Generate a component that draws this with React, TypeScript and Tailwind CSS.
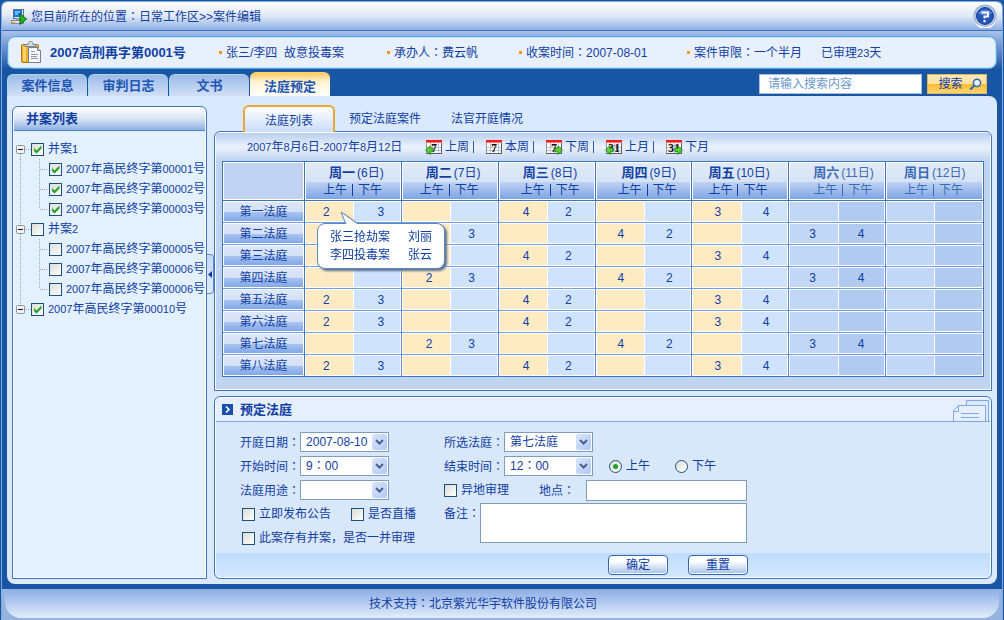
import React from "react";

const FONT = "font-['Liberation_Sans','Noto_Sans_CJK_SC',sans-serif]";

function Colon() {
  return <span className="font-['Noto_Sans_CJK_TC','Noto_Sans_CJK_SC',sans-serif]">：</span>;
}

/* Sets the digits of a mixed label one size smaller than its characters. */
function Mixed({ text }: { text: string }) {
  return (
    <>
      {text.split(/([0-9-]+)/).map((part, i) =>
        i % 2 ? (
          <span key={i} className="text-[11px]">
            {part}
          </span>
        ) : (
          part
        ),
      )}
    </>
  );
}

/* ---------- icons ---------- */

function ComputerIcon() {
  return (
    <svg width="17" height="17" viewBox="0 0 17 17" shapeRendering="crispEdges" aria-hidden="true">
      <path d="M3 1h10v9H3z" fill="#dfe6ee" stroke="#5b7290" />
      <path d="M4 2h8v7H4z" fill="#1d74e0" />
      <path d="M5 3h5v2H5zM5 5h3v2H5z" fill="#55c3ff" />
      <path d="M6 10h4v2H6z" fill="#8c9aab" />
      <path d="M1 12h12v3H1z" fill="#e2e2dc" stroke="#7d8896" />
      <path d="M1 14h4v1H1z" fill="#f2a51f" />
      <path d="M10 5.500l6.500 5.500-6.500 5.500z" fill="#24b41c" stroke="#0b6412" shapeRendering="auto" />
    </svg>
  );
}

function ClipboardIcon() {
  return (
    <svg width="21" height="23" viewBox="0 0 21 23" aria-hidden="true">
      <rect x="0.500" y="3.500" width="17" height="18" rx="1" fill="#f1ae2b" stroke="#a9741b" />
      <path d="M2 5h3v15H2z" fill="#ffd26a" />
      <path d="M4 5.500V3.500h3C7 1.500 8 .5 9.500 .5S12 1.500 12 3.500h3v2z" fill="#d7dbe0" stroke="#7b828c" />
      <path d="M7.500 6.500h9l3 3v12h-12z" fill="#f8fafc" stroke="#75808f" />
      <path d="M16.500 6.500v3h3" fill="#dde3ea" stroke="#75808f" />
      <path d="M10 10.500h4M10 13.500h7M10 15.500h6M10 17.500h7" stroke="#8c97a8" />
    </svg>
  );
}

function HelpIcon() {
  return (
    <svg width="24" height="24" viewBox="0 0 24 24" aria-hidden="true">
      <circle cx="12" cy="12" r="11.500" fill="#9db5da" />
      <path d="M1 14a11 11 0 0 0 22 0a11 9 0 0 1-22 0z" fill="#fff" />
      <circle cx="12" cy="12" r="9.500" fill="#e8eef8" />
      <circle cx="12" cy="12" r="8.500" fill="#2457b4" stroke="#123c8e" />
      <path d="M5 9a8 7 0 0 1 14 0c-3 3-11 3-14 0z" fill="#5685d4" />
      <path d="M8.500 8.500h6.500v4h-3.500v2M11.500 16v2.200" fill="none" stroke="#fff" strokeWidth="2" />
    </svg>
  );
}

function MagnifierIcon() {
  return (
    <svg width="13" height="13" viewBox="0 0 13 13" aria-hidden="true">
      <circle cx="8" cy="4.800" r="3.600" fill="#e9f0fb" stroke="#3565ad" strokeWidth="1.500" />
      <path d="M5.300 7.500L1.300 11.500" stroke="#3565ad" strokeWidth="2.200" />
    </svg>
  );
}

function CalendarIcon({ label, arrow }: { label: string; arrow?: "left" | "right" }) {
  return (
    <svg width="18" height="16" viewBox="0 0 18 16" className="shrink-0" aria-hidden="true">
      <rect x="1.500" y="1.500" width="15" height="13" fill="#fff" stroke="#8a94a6" />
      <path d="M2 8.500h14M2 11.500h14M5.500 4v10M9.500 4v10M13.500 4v10" stroke="#b8c2d2" />
      <path d="M1 1h16v3H1z" fill="#ee1c1c" />
      <path d="M1 3h16v1H1z" fill="#ff7a6a" />
      <path d="M16.500 4v11M1 14.500h16" stroke="#56606f" />
      <text
        x="9"
        y="13"
        textAnchor="middle"
        fontFamily="Liberation Serif, serif"
        fontWeight="bold"
        fontSize="12"
        fill="#111"
      >
        {label}
      </text>
      {arrow === "left" && (
        <path d="M0.500 11L5 7v2.200h3v3.600H5v2.700z" fill="#5ed22e" stroke="#1f8a17" strokeWidth=".9" />
      )}
      {arrow === "right" && (
        <path d="M17.500 11L13 7v2.200h-3v3.600h3v2.700z" fill="#5ed22e" stroke="#1f8a17" strokeWidth=".9" />
      )}
    </svg>
  );
}

function DocumentsIcon() {
  return (
    <svg width="38" height="22" viewBox="0 0 38 22" fill="none" stroke="#7ea8e4" className="self-end" aria-hidden="true">
      <path d="M14.500 6V1.500h22V22" fill="#dce8fb" />
      <path d="M1.500 22V11.500L6.500 6.500h27V22" fill="#e6effe" />
      <path d="M6.500 6.500v6h-5M9 14.500h18M9 18.500h18" />
    </svg>
  );
}

/* ---------- form pieces ---------- */

function CheckBox({ id, checked }: { id: string; checked?: boolean }) {
  return (
    <span className="grid size-[13px] shrink-0">
      <input
        id={id}
        type="checkbox"
        defaultChecked={checked}
        className="peer col-start-1 row-start-1 size-[13px] appearance-none border border-[#1c5180] bg-linear-to-br from-[#dcdcd7] to-white"
      />
      <svg
        viewBox="0 0 13 13"
        className="pointer-events-none invisible col-start-1 row-start-1 size-[13px] peer-checked:visible"
        aria-hidden="true"
      >
        <path d="M3 5v3l2.500 2.500L10.500 5.500v-3L5.500 7.500z" fill="#21a121" />
      </svg>
    </span>
  );
}

function Radio({ id, label, checked }: { id: string; label: string; checked?: boolean }) {
  return (
    <span className="flex items-center gap-1">
      <span className="grid size-[13px] shrink-0">
        <input
          id={id}
          type="radio"
          name="half"
          defaultChecked={checked}
          className="peer col-start-1 row-start-1 size-[13px] appearance-none rounded-full border border-[#1c5180] bg-linear-to-br from-[#dcdcd7] to-white"
        />
        <span className="pointer-events-none invisible col-start-1 row-start-1 size-[5px] place-self-center rounded-full bg-[#21a121] peer-checked:visible" />
      </span>
      <label htmlFor={id}>{label}</label>
    </span>
  );
}

function Select({ id, options, numeric }: { id: string; options: string[]; numeric?: boolean }) {
  return (
    <span className="relative flex h-5 w-[89px]">
      <select
        id={id}
        className={`w-full appearance-none border border-[#7f9db9] bg-white pl-[5px] text-xs leading-4 outline-none ${
          numeric ? "font-['Liberation_Sans','Noto_Sans_CJK_TC',sans-serif]" : ""
        }`}
      >
        {options.map((o) => (
          <option key={o}>{o}</option>
        ))}
      </select>
      <span className="pointer-events-none absolute top-0.5 right-0.5 bottom-0.5 flex w-[15px] items-center justify-center rounded-xs bg-linear-to-br from-[#dbe5fe] to-[#b0c8f8]">
        <svg width="9" height="6" viewBox="0 0 9 6" aria-hidden="true">
          <path d="M1 1l3.500 3.500L8 1" fill="none" stroke="#4d6185" strokeWidth="2" />
        </svg>
      </span>
    </span>
  );
}

function Check({ id, label, checked }: { id: string; label: string; checked?: boolean }) {
  return (
    <span className="flex items-center gap-1">
      <CheckBox id={id} checked={checked} />
      <label htmlFor={id}>{label}</label>
    </span>
  );
}

/* ---------- header ---------- */

const caseFacts: [string, string?][] = [
  ["张三/李四  故意投毒案"],
  ["承办人", "费云帆"],
  ["收案时间", "2007-08-01"],
  ["案件审限", "一个半月"],
];

const mainTabs = ["案件信息", "审判日志", "文书", "法庭预定"];

function Header() {
  return (
    <>
      <header className="flex h-[30px] items-center justify-between rounded-t-md border-t border-b border-t-[#7fa8dc] border-b-[#3a6fbe] bg-linear-to-b from-white via-[#dfe8f6] to-[#8eb0e2] pr-[5px] pl-2">
        <div className="flex items-center gap-1">
          <ComputerIcon />
          <span>
            您目前所在的位置
            <Colon />
            日常工作区&gt;&gt;案件编辑
          </span>
        </div>
        <button type="button" aria-label="帮助">
          <HelpIcon />
        </button>
      </header>
      <div className="bg-linear-to-b from-[#a9c1eb] to-[#1856a4] px-[5px] pt-[5px]">
        <section className="flex h-[33px] items-center rounded-lg border border-[#5f9fe0] bg-[#e8f0fc] pl-[13px] inset-shadow-[0_0_0_1px_#aeeafc]">
          <ClipboardIcon />
          <h1 className="ml-2 w-[169px] text-[13px] font-bold whitespace-nowrap">2007高刑再字第0001号</h1>
          <ul className="grid grid-cols-[168px_132px_168px_134px_auto] items-center">
            {caseFacts.map(([k, v]) => (
              <li key={k} className="flex items-center gap-1 whitespace-pre">
                <span className="size-[3px] bg-[#f7941d]" />
                <span>
                  {k}
                  {v && <Colon />}
                  {v}
                </span>
              </li>
            ))}
            <li className="whitespace-nowrap">
              <Mixed text="已审理23天" />
            </li>
          </ul>
        </section>
      </div>
      <div className="flex h-[27px] items-end justify-between bg-[#1856a4] pr-[15px] pl-[5px]">
        <nav className="flex items-end gap-px">
          {mainTabs.map((t) =>
            t === "法庭预定" ? (
              <a
                key={t}
                href="#court"
                className="flex h-6 w-20 items-center justify-center rounded-t-md border-t border-[#f9d27a] bg-linear-to-b from-[#fccb5c] via-[#fff3d5] via-40% to-white pt-1 text-[13px] font-bold text-[#1f57b3]"
              >
                {t}
              </a>
            ) : (
              <a
                key={t}
                href="#other"
                className="flex h-[22px] w-20 items-center justify-center rounded-t-md border-t border-l border-[#a6dcf8] bg-linear-to-b from-[#9dbbe8] to-[#d2e0f6] text-[13px] font-bold text-[#1f57b3]"
              >
                {t}
              </a>
            ),
          )}
        </nav>
        <form className="mb-0.5 flex gap-[5px]" onSubmit={(e) => e.preventDefault()}>
          <input
            aria-label="搜索"
            placeholder="请输入搜索内容"
            className="h-5 w-[163px] border border-[#a9bfdc] bg-white px-2 outline-none placeholder:text-[#6b98cb]"
          />
          <button
            type="submit"
            className="flex h-5 w-[60px] items-center justify-center gap-1.5 border border-[#e3b65c] bg-[linear-gradient(to_bottom,#ffeabb_0,#ffe0a0_50%,#fdbb2c_50%,#ffd377_100%)] pl-1.5"
          >
            搜索
            <MagnifierIcon />
          </button>
        </form>
      </div>
    </>
  );
}

/* ---------- sidebar ---------- */

type Node = { label: string; checked?: boolean; children?: Node[] };

const tree: Node[] = [
  {
    label: "并案1",
    checked: true,
    children: [
      { label: "2007年高民终字第00001号", checked: true },
      { label: "2007年高民终字第00002号", checked: true },
      { label: "2007年高民终字第00003号", checked: true },
    ],
  },
  {
    label: "并案2",
    children: [
      { label: "2007年高民终字第00005号" },
      { label: "2007年高民终字第00006号" },
      { label: "2007年高民终字第00006号" },
    ],
  },
  { label: "2007年高民终字第00010号", checked: true },
];

function Sidebar() {
  return (
    <aside className="w-[195px] shrink-0 rounded-t-md border border-[#3f74bf] bg-[#e3f0fe] inset-shadow-[0_0_0_1px_#fff]">
      <h2 className="mx-px flex h-6 items-center rounded-t-md border-b border-[#4a7fca] bg-linear-to-b from-white via-[#dae5f5] to-[#8fb1e3] pl-3 text-[13px] font-bold">
        并案列表
      </h2>
      <ul className="mt-2 ml-px">
        {tree.map((n, i) => {
          const last = i === tree.length - 1;
          return (
            <li key={n.label}>
              <div className="flex h-5 items-center">
                <button type="button" aria-label="折叠" className="h-5 w-[17px]">
                  <svg width="17" height="20" viewBox="0 0 17 20" aria-hidden="true">
                    <g stroke="#a3a69f" strokeDasharray="1 1">
                      {i > 0 && <path d="M6.500 0v6" />}
                      {!last && <path d="M6.500 15v5" />}
                      <path d="M12 10.500h5" />
                    </g>
                    <rect x="2.500" y="6.500" width="8" height="8" rx="1" fill="#f3f1ea" stroke="#8296ae" />
                    <path d="M4 10.500h5" stroke="#111" />
                  </svg>
                </button>
                <CheckBox id={`n${i}`} checked={n.checked} />
                <label htmlFor={`n${i}`} className="ml-1 whitespace-nowrap">
                  <Mixed text={n.label} />
                </label>
              </div>
              {n.children && (
                <ul>
                  {n.children.map((c, j) => (
                    <li key={j} className="flex h-5 items-center">
                      <svg width="35" height="20" viewBox="0 0 35 20" className="shrink-0" aria-hidden="true">
                        <g stroke="#a3a69f" strokeDasharray="1 1">
                          <path d="M6.500 0v20" />
                          <path d={j === n.children!.length - 1 ? "M25.500 0v10" : "M25.500 0v20"} />
                          <path d="M26 10.500h8" />
                        </g>
                      </svg>
                      <CheckBox id={`n${i}-${j}`} checked={c.checked} />
                      <label htmlFor={`n${i}-${j}`} className="ml-1 whitespace-nowrap">
                        <Mixed text={c.label} />
                      </label>
                    </li>
                  ))}
                </ul>
              )}
            </li>
          );
        })}
      </ul>
    </aside>
  );
}

/* ---------- schedule ---------- */

type Day = { name: string; date: string; pad: string; sub: string; am: string; pm: string; off?: boolean };

const days: Day[] = [
  { name: "周一", date: "(6日)", pad: "pl-6", sub: "pl-[18px]", am: "pl-[18px]", pm: "pl-6" },
  { name: "周二", date: "(7日)", pad: "pl-6", sub: "pl-[18px]", am: "pl-6", pm: "pl-[18px]" },
  { name: "周三", date: "(8日)", pad: "pl-6", sub: "pl-[22px]", am: "pl-6", pm: "pl-[18px]" },
  { name: "周四", date: "(9日)", pad: "pl-[26px]", sub: "pl-[22px]", am: "pl-[22px]", pm: "pl-[22px]" },
  { name: "周五", date: "(10日)", pad: "pl-4", sub: "pl-4", am: "pl-[22px]", pm: "pl-[22px]" },
  { name: "周六", date: "(11日)", pad: "pl-6", sub: "pl-6", am: "pl-5", pm: "pl-5", off: true },
  { name: "周日", date: "(12日)", pad: "pl-[18px]", sub: "pl-[18px]", am: "pl-5", pm: "pl-5", off: true },
];

const courts: { name: string; slots: string[] }[] = [
  { name: "第一法庭", slots: ["2", "3", "", "", "4", "2", "", "", "3", "4", "", "", "", ""] },
  { name: "第二法庭", slots: ["", "", "", "3", "", "", "4", "2", "", "", "3", "4", "", ""] },
  { name: "第三法庭", slots: ["", "", "", "", "4", "2", "", "", "3", "4", "", "", "", ""] },
  { name: "第四法庭", slots: ["", "", "2", "3", "", "", "4", "2", "", "", "3", "4", "", ""] },
  { name: "第五法庭", slots: ["2", "3", "", "", "4", "2", "", "", "3", "4", "", "", "", ""] },
  { name: "第六法庭", slots: ["2", "3", "", "", "4", "2", "", "", "3", "4", "", "", "", ""] },
  { name: "第七法庭", slots: ["", "", "2", "3", "", "", "4", "2", "", "", "3", "4", "", ""] },
  { name: "第八法庭", slots: ["2", "3", "", "", "4", "2", "", "", "3", "4", "", "", "", ""] },
];

const jumps: { text: string; label: string; arrow?: "left" | "right" }[] = [
  { text: "上周", label: "7", arrow: "left" },
  { text: "本周", label: "7" },
  { text: "下周", label: "7", arrow: "right" },
  { text: "上月", label: "31", arrow: "left" },
  { text: "下月", label: "31", arrow: "right" },
];

function ScheduleTable() {
  return (
    <table className="w-full table-fixed border-separate border-spacing-0 border border-b-0 border-[#3f74bf]">
      <colgroup>
        <col className="w-[82px]" />
        {days.flatMap((d) => [<col key={d.name + "a"} />, <col key={d.name + "b"} />])}
      </colgroup>
      <thead>
        <tr className="h-[39px]">
          <th
            aria-label="法庭"
            className="border-r border-b border-[#3f74bf] bg-[#c0d3f2] p-0 inset-shadow-[0_0_0_1px_#fff]"
          />
          {days.map((d, i) => (
            <th
              key={d.name}
              colSpan={2}
              className={`border-b border-[#3f74bf] bg-[linear-gradient(to_bottom,#e2ebf8_0,#d6e2f5_52%,#c0d3f3_52%,#7aa2e5_100%)] p-0 text-left align-middle font-normal inset-shadow-[0_0_0_1px_#fff] ${
                i < days.length - 1 ? "border-r" : ""
              } ${d.off ? "text-[#3a6bb4]" : ""}`}
            >
              <div className={`flex h-[18px] items-center gap-0.5 whitespace-nowrap ${d.pad}`}>
                <b className="text-[13px]">{d.name}</b>
                <span>{d.date}</span>
              </div>
              <div className={`flex h-4 items-center gap-[5px] whitespace-nowrap ${d.sub}`}>
                <span>上午</span>
                <span className="h-3 w-px bg-current" />
                <span>下午</span>
              </div>
            </th>
          ))}
        </tr>
      </thead>
      <tbody>
        {courts.map((c) => (
          <tr key={c.name} className="h-[22px] last:[&>*]:border-b-[#3f74bf]">
            <th className="border-r border-b border-[#6f9fe6] border-r-[#3f74bf] bg-[linear-gradient(to_bottom,#dfe8f7_0,#d2dff5_54%,#a8c3f0_54%,#7ba4e7_100%)] p-0 text-center font-normal inset-shadow-[0_0_0_1px_#fff]">
              {c.name}
            </th>
            {c.slots.map((s, i) => {
              const day = days[i >> 1];
              const pm = i % 2 === 1;
              const color = day.off ? (pm ? "bg-[#b0caf0]" : "bg-[#c2d6f6]") : pm ? "bg-[#cfe3fd]" : "bg-[#feebc3]";
              const edge = pm
                ? `inset-shadow-[0_0_0_1px_#fff] ${i < 13 ? "border-r border-r-[#5c8edb]" : ""}`
                : "shadow-[inset_1px_1px_0_#fff,inset_0_-1px_0_#fff]";
              return (
                <td key={i} className={`border-b border-[#6f9fe6] p-0 ${color} ${edge} ${pm ? day.pm : day.am}`}>
                  {s}
                </td>
              );
            })}
          </tr>
        ))}
      </tbody>
    </table>
  );
}

function Balloon() {
  return (
    <div role="tooltip" className="absolute top-[50px] left-[95px] drop-shadow-[2px_2px_1px_#5a6f8f]">
      <svg width="42" height="13" viewBox="0 0 42 13" className="relative z-10 -mb-px block" aria-hidden="true">
        <path d="M29 13L24 1L41 13" fill="#fff" stroke="#5a86c2" />
      </svg>
      <div className="grid grid-cols-[78px_auto] rounded-lg border border-[#5a86c2] bg-white px-3 py-1 leading-[18px]">
        <span>张三抢劫案</span>
        <span>刘丽</span>
        <span>李四投毒案</span>
        <span>张云</span>
      </div>
    </div>
  );
}

function Schedule() {
  return (
    <section>
      <nav className="flex items-end pl-[29px]">
        <a
          href="#courts"
          className="relative z-10 -mb-px flex h-[27px] w-[92px] items-center justify-center rounded-t-md border-2 border-b-0 border-[#e3a73c] bg-linear-to-b from-white to-[#c9dcf6] pt-0.5"
        >
          法庭列表
        </a>
        <a href="#booked" className="flex h-6 items-center pl-3.5">
          预定法庭案件
        </a>
        <a href="#judges" className="flex h-6 items-center pl-[30px]">
          法官开庭情况
        </a>
      </nav>
      <div className="rounded-t-md border border-[#3f74bf] bg-[#c0d4f1] px-[7px] pb-[13px] inset-shadow-[0_0_0_1px_#fff]">
        <div className="-mx-1.5 mt-px flex h-7 items-center bg-linear-to-b from-[#b9ceef] via-[#ebf2fc] to-[#c0d4f1] pl-[31px]">
          <span className="w-[178px] whitespace-nowrap">
            <Mixed text="2007年8月6日-2007年8月12日" />
          </span>
          {jumps.map((j, i) => (
            <button key={j.text} type="button" className="flex w-15 items-center gap-0.5">
              <CalendarIcon label={j.label} arrow={j.arrow} />
              <span>{j.text}</span>
              {i < jumps.length - 1 && <span className="ml-0.5 h-3 w-px bg-[#2a5cb0]" />}
            </button>
          ))}
        </div>
        <div className="relative">
          <ScheduleTable />
          <Balloon />
        </div>
      </div>
    </section>
  );
}

/* ---------- booking form ---------- */

function FieldLabel({ htmlFor, children }: { htmlFor: string; children: string }) {
  return (
    <label htmlFor={htmlFor} className="whitespace-nowrap">
      {children}
      <Colon />
    </label>
  );
}

function Booking() {
  const action =
    "h-5 w-15 rounded-sm border border-[#2f66b8] bg-linear-to-b from-white from-30% to-[#a3bfe9] inset-shadow-[0_0_0_1px_#fff]";
  return (
    <form
      className="mt-[5px] rounded-md border border-[#3f74bf] bg-[#d9e7fa] inset-shadow-[0_0_0_1px_#fff]"
      onSubmit={(e) => e.preventDefault()}
    >
      <h2 className="mx-px mt-px flex h-6 items-center justify-between rounded-t-md border-b border-[#7ea8e4] bg-[#e6effe] pl-1.5 text-[13px] font-bold">
        <span className="flex items-center gap-[7px]">
          <svg width="11" height="11" viewBox="0 0 11 11" aria-hidden="true">
            <path d="M0 0h11v11H0z" fill="#1b4fae" />
            <path d="M4 2.500l3 3-3 3" fill="none" stroke="#fff" strokeWidth="1.600" />
          </svg>
          预定法庭
        </span>
        <DocumentsIcon />
      </h2>
      <div className="grid grid-cols-[204px_1fr] pt-2 pb-[3px] pl-[25px]">
        <div className="[&>div]:flex [&>div]:h-6 [&>div]:items-center">
          <div>
            <FieldLabel htmlFor="date">开庭日期</FieldLabel>
            <Select id="date" options={["2007-08-10"]} />
          </div>
          <div>
            <FieldLabel htmlFor="start">开始时间</FieldLabel>
            <Select id="start" options={["9：00"]} numeric />
          </div>
          <div>
            <FieldLabel htmlFor="use">法庭用途</FieldLabel>
            <Select id="use" options={[""]} />
          </div>
          <div className="gap-5 pl-0.5">
            <Check id="publish" label="立即发布公告" />
            <Check id="live" label="是否直播" />
          </div>
          <div className="pl-0.5">
            <Check id="merge" label="此案存有并案，是否一并审理" />
          </div>
        </div>
        <div>
          <div className="flex h-6 items-center">
            <FieldLabel htmlFor="court">所选法庭</FieldLabel>
            <Select id="court" options={["第七法庭"]} />
          </div>
          <div className="flex h-6 items-center">
            <FieldLabel htmlFor="end">结束时间</FieldLabel>
            <Select id="end" options={["12：00"]} numeric />
            <span className="ml-4 flex gap-[25px]">
              <Radio id="am" label="上午" checked />
              <Radio id="pm" label="下午" />
            </span>
          </div>
          <div className="flex h-6 items-center">
            <Check id="remote" label="异地审理" />
            <span className="ml-[30px] flex items-center gap-[11px]">
              <FieldLabel htmlFor="place">地点</FieldLabel>
              <input id="place" className="h-[21px] w-[161px] border border-[#7f9db9] bg-white px-1 outline-none" />
            </span>
          </div>
          <div className="flex items-start pt-px">
            <span className="flex h-5 items-center">
              <FieldLabel htmlFor="note">备注</FieldLabel>
            </span>
            <textarea
              id="note"
              className="block h-10 w-[267px] resize-none border border-[#7f9db9] bg-white px-1 outline-none"
            />
          </div>
        </div>
      </div>
      <div className="mx-px mb-px flex h-6 items-center gap-5 rounded-b-md bg-linear-to-b from-[#bfdcfd] to-[#d3e7fe] pl-[392px]">
        <button type="submit" className={action}>
          确定
        </button>
        <button type="reset" className={action}>
          重置
        </button>
      </div>
    </form>
  );
}

export default function App() {
  return (
    <div className={`${FONT} flex min-h-screen flex-col bg-[#1856a4] pt-px text-xs leading-4 text-[#1140a3]`}>
      <div className="mx-px flex grow flex-col rounded-t-md border-x border-[#7fa8dc]">
        <Header />
        <main className="mx-[5px] flex rounded-lg rounded-tl-none bg-[#dae9fd] pr-[5px] pb-[5px] pl-[5px]">
          <div className="flex pt-2.5">
            <Sidebar />
            <button
              type="button"
              aria-label="收起"
              className="mt-[148px] flex h-10 w-[7px] items-center justify-center rounded-r-sm border border-l-0 border-[#5f8fd6] bg-linear-to-b from-[#c3d8f7] to-[#dfebfc]"
            >
              <svg width="4" height="7" viewBox="0 0 4 7" className="shrink-0" aria-hidden="true">
                <path d="M4 0v7L0 3.500z" fill="#0d3b94" />
              </svg>
            </button>
          </div>
          <div className="min-w-0 grow pt-[9px]">
            <Schedule />
            <Booking />
          </div>
        </main>
        <footer className="mt-[5px] flex min-h-[29px] grow items-stretch bg-[#94b3de] px-[3px] pb-0.5">
          <div className="flex grow items-center justify-center rounded-t-md rounded-b-2xl bg-linear-to-b from-[#8bace2] to-[#e3edfc] pr-[38px]">
            <span>
              技术支持
              <Colon />
              北京紫光华宇软件股份有限公司
            </span>
          </div>
        </footer>
      </div>
    </div>
  );
}
